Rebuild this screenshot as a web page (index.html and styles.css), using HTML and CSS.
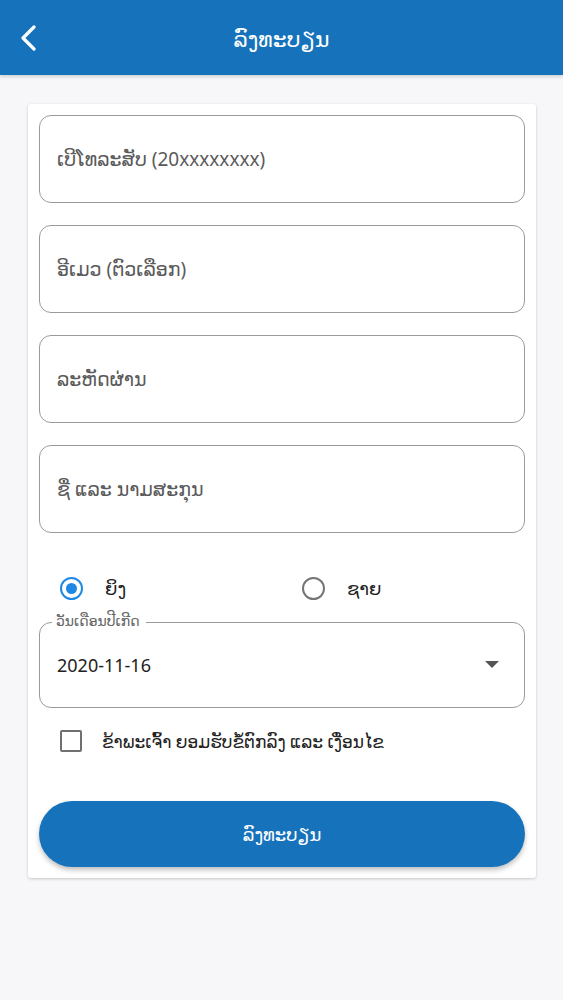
FILE: index.html
```html
<!DOCTYPE html>
<html lang="lo">
<head>
<meta charset="utf-8">
<link rel="stylesheet" href="styles.css">
</head>
<body>
<header class="appbar">
  <button class="back" aria-label="back">
    <svg width="18" height="26" viewBox="0 0 18 26"><path d="M15 2 L4 13 L15 24" fill="none" stroke="#fff" stroke-width="3.2" stroke-linecap="round" stroke-linejoin="round"/></svg>
  </button>
  <h1 class="title">ລົງທະບຽນ</h1>
</header>
<main class="card">
  <div class="field"><span class="ph">ເບີໂທລະສັບ (20xxxxxxxx)</span></div>
  <div class="field"><span class="ph">ອີເມວ (ຕົວເລືອກ)</span></div>
  <div class="field"><span class="ph">ລະຫັດຜ່ານ</span></div>
  <div class="field"><span class="ph">ຊື່ ແລະ ນາມສະກຸນ</span></div>
  <div class="radios">
    <label class="radio"><span class="dot on"></span><span>ຍິງ</span></label>
    <label class="radio"><span class="dot"></span><span>ຊາຍ</span></label>
  </div>
  <div class="datefield">
    <span class="legend">ວັນເດືອນປີເກີດ</span>
    <span class="value">2020-11-16</span>
    <svg class="caret" width="14" height="7" viewBox="0 0 14 7"><path d="M0 0 L14 0 L7 7 Z" fill="#555"/></svg>
  </div>
  <label class="check"><span class="box"></span><span>ຂ້າພະເຈົ້າ ຍອມຮັບຂໍ້ຕົກລົງ ແລະ ເງື່ອນໄຂ</span></label>
  <button class="submit">ລົງທະບຽນ</button>
</main>
</body>
</html>
```
FILE: styles.css
```css
* { box-sizing: border-box; }
html, body { margin: 0; padding: 0; }
body {
  background: #f7f7f9;
  font-family: "Noto Sans", "DejaVu Sans", sans-serif;
  width: 563px;
  height: 1000px;
}
.appbar {
  height: 75px;
  background: #1673bb;
  display: flex;
  align-items: center;
  justify-content: center;
  position: relative;
  box-shadow: 0 2px 3px rgba(0,0,0,0.15);
}
.back {
  position: absolute;
  left: 19px;
  top: 25px;
  background: none;
  border: 0;
  padding: 0;
  display: flex;
}
.title {
  margin: 0;
  color: #fff;
  font-size: 22px;
  font-weight: 400;
}
.card {
  margin: 29px 27px 0 28px;
  background: #fff;
  border-radius: 3px;
  box-shadow: 0 1px 3px rgba(0,0,0,0.2);
  padding: 11px;
  display: flex;
  flex-direction: column;
}
.field {
  height: 88px;
  border: 1.3px solid #9a9a9a;
  border-radius: 12px;
  display: flex;
  align-items: center;
  padding-left: 17px;
  margin-bottom: 22px;
}
.ph {
  color: #5a5a5a;
  font-size: 19px;
}
.radios {
  display: flex;
  height: 66px;
  align-items: center;
  padding-left: 21px;
}
.radio {
  display: flex;
  align-items: center;
  gap: 22px;
  font-size: 18px;
  color: #222;
  flex: 0 0 242px;
}
.dot {
  width: 23px;
  height: 23px;
  border-radius: 50%;
  border: 2.2px solid #757575;
  display: flex;
  align-items: center;
  justify-content: center;
}
.dot.on { border-color: #1e88e5; }
.dot.on::after {
  content: "";
  width: 11px;
  height: 11px;
  border-radius: 50%;
  background: #1e88e5;
}
.datefield {
  position: relative;
  height: 86px;
  border: 1.3px solid #9a9a9a;
  border-radius: 12px;
  display: flex;
  align-items: center;
  padding-left: 17px;
  margin-top: 1px;
}
.legend {
  position: absolute;
  top: -12px;
  left: 12px;
  background: #fff;
  padding: 0 6px 0 4px;
  font-size: 14px;
  color: #666;
}
.value {
  font-size: 18px;
  color: #222;
}
.caret {
  position: absolute;
  right: 25px;
  top: 38px;
}
.check {
  display: flex;
  align-items: center;
  gap: 20px;
  height: 66px;
  padding-left: 21px;
  font-size: 17px;
  color: #222;
}
.box {
  width: 22px;
  height: 22px;
  border: 2.2px solid #707070;
  border-radius: 2px;
}
.submit {
  margin-top: 27px;
  height: 66px;
  border: 0;
  border-radius: 33px;
  background: #1673bb;
  color: #fff;
  font-family: inherit;
  font-size: 18px;
  box-shadow: 0 3px 5px rgba(0,0,0,0.25);
}
```
